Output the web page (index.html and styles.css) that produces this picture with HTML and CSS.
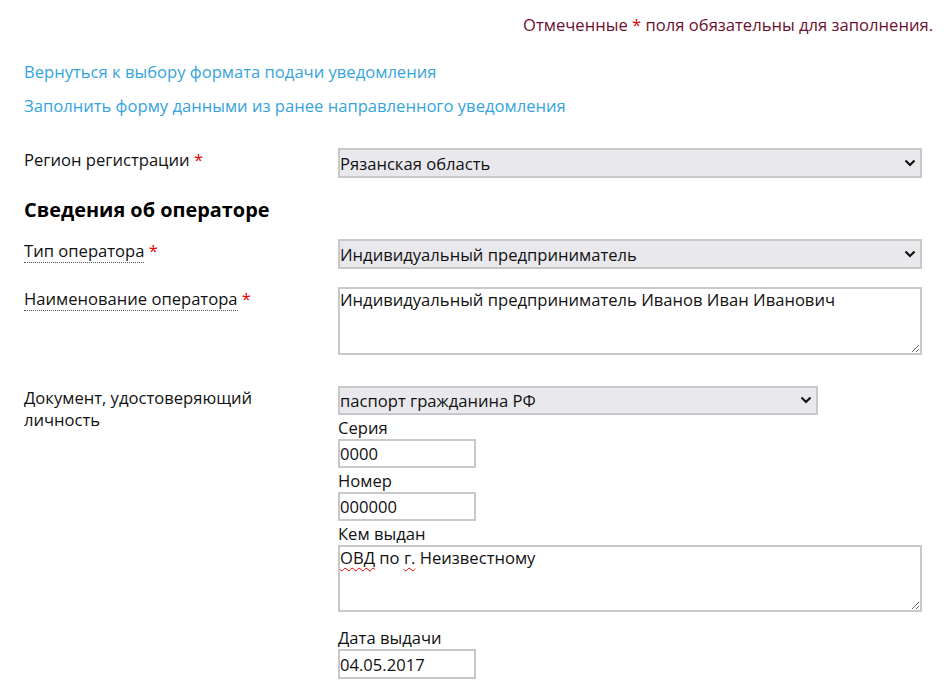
FILE: index.html
```html
<!DOCTYPE html>
<html lang="ru">
<head>
    <meta charset="UTF-8">
    <meta name="viewport" content="width=device-width, initial-scale=1.0">
    <title>Уведомление об обработке персональных данных</title>
    <link rel="stylesheet" href="styles.css">
</head>
<body>
    <div class="page">
        <p class="required-note">Отмеченные <span class="star">*</span> поля обязательны для заполнения.</p>

        <div class="links">
            <a href="#">Вернуться к выбору формата подачи уведомления</a>
            <a href="#">Заполнить форму данными из ранее направленного уведомления</a>
        </div>

        <div class="row">
            <label class="field-label">Регион регистрации <span class="req">*</span></label>
            <div class="field">
                <div class="select-box select-wide">
                    <select>
                        <option>Рязанская область</option>
                    </select>
                    <svg class="chevron" width="12" height="8" viewBox="0 0 12 8"><path d="M1.5 1.5 6 6l4.5-4.5" fill="none" stroke="#111" stroke-width="2.2"/></svg>
                </div>
            </div>
        </div>

        <h2 class="section-title">Сведения об операторе</h2>

        <div class="row row-first">
            <label class="field-label"><span class="hint">Тип оператора</span> <span class="req">*</span></label>
            <div class="field">
                <div class="select-box select-wide">
                    <select>
                        <option>Индивидуальный предприниматель</option>
                    </select>
                    <svg class="chevron" width="12" height="8" viewBox="0 0 12 8"><path d="M1.5 1.5 6 6l4.5-4.5" fill="none" stroke="#111" stroke-width="2.2"/></svg>
                </div>
            </div>
        </div>

        <div class="row">
            <label class="field-label"><span class="hint">Наименование оператора</span> <span class="req">*</span></label>
            <div class="field">
                <textarea class="area" spellcheck="false">Индивидуальный предприниматель Иванов Иван Иванович</textarea>
            </div>
        </div>

        <div class="row row-doc">
            <label class="field-label">Документ, удостоверяющий личность</label>
            <div class="field">
                <div class="select-box select-doc">
                    <select>
                        <option>паспорт гражданина РФ</option>
                    </select>
                    <svg class="chevron" width="12" height="8" viewBox="0 0 12 8"><path d="M1.5 1.5 6 6l4.5-4.5" fill="none" stroke="#111" stroke-width="2.2"/></svg>
                </div>
                <div class="sub-label">Серия</div>
                <input class="input-short" type="text" value="0000">
                <div class="sub-label">Номер</div>
                <input class="input-short" type="text" value="000000">
                <div class="sub-label">Кем выдан</div>
                <div class="area area-fake"><span class="typo">ОВД</span> по <span class="typo">г.</span> Неизвестному</div>
                <div class="sub-label sub-label-gap">Дата выдачи</div>
                <input class="input-short input-date" type="text" value="04.05.2017">
            </div>
        </div>
    </div>
</body>
</html>
```

FILE: styles.css
```css
* {
    box-sizing: border-box;
}

body {
    margin: 0;
    background: #fff;
    color: #111;
    font-family: "Open Sans", Arial, sans-serif;
    font-size: 16.6px;
    line-height: 22px;
}

.page {
    padding: 14px 15px 0 24px;
}

.required-note {
    margin: 0;
    text-align: right;
    color: #6b1030;
}

.required-note .star {
    color: #e00000;
}

.links {
    display: flex;
    flex-direction: column;
    align-items: flex-start;
    gap: 12px;
    margin-top: 25px;
}

.links a {
    color: #35a4dc;
    text-decoration: none;
}

.row {
    display: grid;
    grid-template-columns: 314px 584px;
    margin-top: 31px;
}

.row + .row {
    margin-top: 18px;
}

.row-first {
    margin-top: 16px;
}

.row-doc {
    margin-top: 31px !important;
}

.field-label {
    padding-top: 1px;
}

.req {
    color: #e00000;
}

.hint {
    border-bottom: 1px dotted #555;
}

.section-title {
    margin: 19px 0 0;
    font-size: 19.9px;
    font-weight: 700;
    line-height: 26px;
    color: #000;
}

.row-doc .field-label {
    padding-right: 40px;
}

select,
input,
textarea,
.area-fake {
    font-family: "Open Sans", Arial, sans-serif;
    font-size: 16.6px;
    color: #111;
    border: 2px solid #c8c8c8;
    border-radius: 0;
    margin: 0;
    outline: none;
}

/* select with a drawn chevron on top */
.select-box {
    position: relative;
    height: 30px;
}

.select-box select {
    appearance: none;
    -webkit-appearance: none;
    display: block;
    width: 100%;
    height: 100%;
    padding: 0 24px 0 0;
    background-color: #e9e9ed;
}

.chevron {
    position: absolute;
    right: 6px;
    top: 11px;
    pointer-events: none;
}

.select-wide {
    width: 584px;
}

.select-doc {
    width: 480px;
    height: 29px;
}

.select-doc .chevron {
    top: 10px;
}

.area {
    display: block;
    width: 584px;
    height: 68px;
    padding: 0;
    line-height: 22px;
    background: #fff;
    resize: both;
    overflow: auto;
}

.area-fake {
    height: 67px;
}

.typo {
    text-decoration: underline wavy #e00000;
    text-decoration-thickness: 1px;
    text-underline-offset: 3px;
}

.sub-label {
    padding-top: 1px;
    line-height: 23px;
}

.sub-label-gap {
    margin-top: 13px;
}

.input-short {
    display: block;
    width: 138px;
    height: 29px;
    padding: 0;
    background: #fff;
}

.input-date {
    height: 30px;
}
```
